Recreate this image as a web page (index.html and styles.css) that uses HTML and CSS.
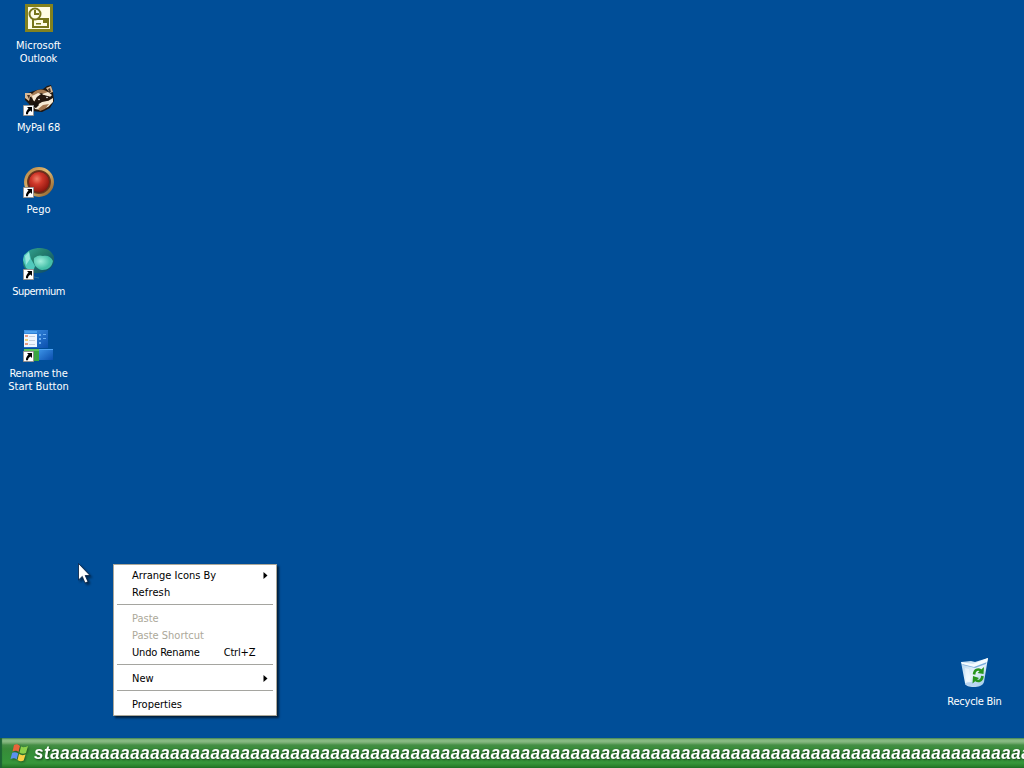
FILE: index.html
```
<!DOCTYPE html>
<html lang="en">
<head>
<meta charset="utf-8">
<title>Desktop</title>
<link rel="stylesheet" href="styles.css">
</head>
<body>
<svg class="defs" width="0" height="0">
  <defs>
    <symbol id="shortcut" viewBox="0 0 11 11">
      <path fill="#fff" d="M0 0h11v11H0z"/>
      <path fill="none" stroke="#222" stroke-width=".6" d="M.3.3h10.4v10.4H.3z"/>
      <path fill="#000" d="M4 2h5v5L7.500 5.500C6 6.500 5 7.500 5 9.300H3C2.600 7.200 4 5.200 5.500 3.600z"/>
    </symbol>
    <radialGradient id="red" cx=".4" cy=".35" r=".65"><stop offset="0" stop-color="#ef8068"/><stop offset=".4" stop-color="#d0382a"/><stop offset="1" stop-color="#8d160e"/></radialGradient>
    <linearGradient id="gold" x2="1" y2="1"><stop offset="0" stop-color="#b5803f"/><stop offset=".45" stop-color="#e0bb74"/><stop offset="1" stop-color="#8a5a26"/></linearGradient>
    <linearGradient id="teal" x2="1" y2="1"><stop offset="0" stop-color="#35a99d"/><stop offset=".4" stop-color="#24806f"/><stop offset="1" stop-color="#0b4268"/></linearGradient>
    <radialGradient id="mint" cx=".35" cy=".4"><stop offset="0" stop-color="#a0eedb"/><stop offset="1" stop-color="#45bfa8"/></radialGradient>
    <linearGradient id="panel" x2="1" y2="1"><stop offset="0" stop-color="#3d94e8"/><stop offset="1" stop-color="#0b4fae"/></linearGradient>
    <linearGradient id="glass" x2="1" y2="1"><stop offset="0" stop-color="#a9cdea"/><stop offset=".5" stop-color="#e9f5fc"/><stop offset="1" stop-color="#8bbce2"/></linearGradient>
  </defs>
</svg>
<main class="desktop">
  <section class="icons">
    <div class="item">
      <svg class="icon" viewBox="0 0 32 32">
        <path fill="#83821f" d="M2 2h28v28H2z"/><path fill="#fffde6" d="M5 5h22v22H5z"/>
        <path fill="#77751b" d="M9 16h17v10H9z"/><path fill="#fffde6" d="M11 18h13v6H11z"/><path fill="#77751b" d="M20 18h4v3h-4zM13 21h5v1.500h-5z"/>
        <circle cx="12" cy="12" r="5.500" fill="#fffde6" stroke="#77751b" stroke-width="2"/><path fill="none" stroke="#77751b" stroke-width="2" d="M12 8v4h4"/>
      </svg>
      <span class="label">Microsoft<br><span class="snug">Outlook</span></span>
    </div>
    <div class="item">
      <svg class="icon" viewBox="0 0 32 32">
        <path fill="#20160e" d="M2 10l6-2 6-2 6-1 4-3 4-1 2 7 1 9-4 7-8 4-10-1-3-7-4-4z"/>
        <path fill="#a57c56" d="M11 8c5-4 11-3 15 1l-4 1-5-1-4 5-3 1-3-3z"/>
        <path fill="#d9b894" d="M2 9l6 0 2 3-3 1-1 4-4-3zM23 4l5-2 2 6-3 1z"/>
        <path fill="#4a3524" d="M4 11l3 0-1 4zM25 5l2-1 1 4-2 0z"/>
        <path fill="#f6e9d4" d="M9 12l6-3 3 1-4 3-2 5-2-2zM19 10l6-2 4 3-2 2-5-1zM11 23l5-4 5-3 4 1 5-3 0 4-5 5-7 3-6-1z"/>
        <path fill="#24170f" d="M14 13l7-2 7 2-4 4-5 1-5 3-3-3z"/>
        <circle cx="16" cy="15.500" r=".8" fill="#fff"/><circle cx="24" cy="13.500" r=".8" fill="#fff"/>
        <path fill="#a27650" d="M15 25l5-4 6-1-4 5-5 2z"/><path fill="#17100c" d="M10 19l4-1 2 3-3 3-3-1z"/>
        <use href="#shortcut" x="0" y="21" width="11" height="11"/>
      </svg>
      <span class="label"><span class="snug">MyPal 68</span></span>
    </div>
    <div class="item">
      <svg class="icon" viewBox="0 0 32 32">
        <circle cx="16" cy="16" r="13.500" fill="#693b20" stroke="url(#gold)" stroke-width="3"/>
        <circle cx="16" cy="16" r="10.500" fill="url(#red)" stroke="#67281b"/>
        <use href="#shortcut" x="0" y="21" width="11" height="11"/>
      </svg>
      <span class="label">Pego</span>
    </div>
    <div class="item">
      <svg class="icon" viewBox="0 0 32 32">
        <path fill="url(#teal)" d="M0 12C2 3 9 0 17 0c9 0 15 6 14 12 0 7-6 12-14 13C7 26-1 22 0 12z"/>
        <path fill="#51c9bd" d="M1 7l5-4 2 8 4 7-2 6-7-4-3-8z"/>
        <path fill="#98e7dc" d="M2 8l4-4 1 7-4 6z"/>
        <path fill="url(#mint)" d="M11 10c4-3 6-3 9-2 5-1 8 1 10 5-1 6-5 9-11 9-6-1-9-6-8-12z"/>
        <path fill="none" stroke="#2875a1" d="M11 29l5 1"/>
        <use href="#shortcut" x="0" y="21" width="11" height="11"/>
      </svg>
      <span class="label"><span class="tight">Supermium</span></span>
    </div>
    <div class="item">
      <svg class="icon" viewBox="0 0 32 32">
        <path fill="url(#panel)" d="M1 0h24v18H1z"/><path fill="#eef6ff" d="M1 4h13v13H1z"/>
        <path fill="#4ba0ed" d="M2 1h12v2H2z"/><path fill="#e49a83" d="M2 5h3v2H2zM2 13h3v2H2z"/><path fill="#efcf76" d="M2 9h3v2H2z"/>
        <path stroke="#c3cfdf" d="M6 6.500h6M6 10.500h6M6 14.500h6"/><path fill="#6aaef0" d="M16 4h2v2h-2zM20 4h3v1h-3zM16 8h2v2h-2zM20 8h3v1h-3zM16 12h2v2h-2z"/>
        <path fill="#39a542" d="M1 19h15v12H1z"/><path fill="#5cc05e" d="M1 19h15v2H1z"/>
        <path fill="url(#panel)" d="M16 19h14v11H16z"/><path fill="#4da2f3" d="M16 19h14v1H16z"/>
        <use href="#shortcut" x="0" y="21" width="11" height="11"/>
      </svg>
      <span class="label"><span class="snug">Rename the</span><br>Start Button</span>
    </div>
  </section>
  <div class="item bin">
    <svg class="icon" viewBox="0 0 32 32">
      <path fill="url(#glass)" d="M2 5l10-1 4 1L29 1l-4 24c-1 4-6 5-10 5-5 0-8-1-9-4z"/>
      <path fill="#7bacdb" d="M3 6l11 2L28 3l-1 4-11 4-12-3z"/><path fill="#f4fbff" d="M2 5l12 2L29 1l-1 4-13 5-12-3z"/>
      <path fill="#f9fdff" opacity=".5" d="M6 11l4 1 2 14-5-2z"/><ellipse cx="13" cy="27" rx="7" ry="2" fill="#b9d5f1"/>
      <g fill="none" stroke="#27951e" stroke-width="2.600"><path d="M15 17.500c.5-5 4-6 7-4"/><path d="M23.500 19c-.5 5-4 6-7 4"/></g>
      <path fill="#27951e" d="M25 10l-.5 7-6-1zM13.500 26.500l.5-7.500 6 2z"/>
    </svg>
    <span class="label"><span class="mid">Recycle Bin</span></span>
  </div>
  <svg class="cursor" viewBox="0 0 14 22"><path fill="#fff" stroke="#001b3d" stroke-width=".8" d="M.5.500V17l3.800-3.600L7 20l3-1.200-2.800-6.300H12z"/></svg>
  <nav class="menu">
    <div class="row"><span>Arrange Icons By</span><svg class="arrow" viewBox="0 0 4 7"><path d="M0 0l4 3.500L0 7z"/></svg></div>
    <div class="row"><span class="wide">Refresh</span></div>
    <hr>
    <div class="row off"><span>Paste</span></div>
    <div class="row off"><span>Paste Shortcut</span></div>
    <div class="row"><span class="snug">Undo Rename</span><span class="key">Ctrl+Z</span></div>
    <hr>
    <div class="row"><span>New</span><svg class="arrow" viewBox="0 0 4 7"><path d="M0 0l4 3.500L0 7z"/></svg></div>
    <hr>
    <div class="row"><span>Properties</span></div>
  </nav>
</main>
<footer class="taskbar">
  <svg class="flag" viewBox="0 0 20 20">
    <path fill="#e8643b" d="M4 2c2-1 4-1 6 1L8.500 9C7 7.500 4.500 7.500 2.500 8.500z"/>
    <path fill="#8bd04b" d="M11 3.500c2 1 4 1 7-.5l-2 7c-2 1-4 1-6.500-.5z"/>
    <path fill="#5b91ee" d="M2.200 9.800c2-1 4-.8 6 .6l-1.500 6C5 15 3 15 .5 16z"/>
    <path fill="#f7cf45" d="M9 11c2 1.300 4 1.500 6.500.5l-1.800 6c-2 1-4 1-6.200-.5z"/>
  </svg>
  <span class="start">staaaaaaaaaaaaaaaaaaaaaaaaaaaaaaaaaaaaaaaaaaaaaaaaaaaaaaaaaaaaaaaaaaaaaaaaaaaaaaaaaaaaaaaaaaaaaaaaaa</span>
</footer>
</body>
</html>
```
FILE: styles.css
```
* { box-sizing: border-box; }
body {
  margin: 0;
  width: 1024px;
  height: 768px;
  overflow: hidden;
  display: flex;
  flex-direction: column;
  background: #004e98;
  font: 11px/13px "DejaVu Sans Condensed", "DejaVu Sans", sans-serif;
  font-stretch: condensed;
}
.defs { position: absolute; }
.desktop { flex: 1; position: relative; }
.icons { width: 77px; padding-top: 2px; }
.item { width: 77px; height: 82px; display: flex; flex-direction: column; align-items: center; }
.icon { width: 32px; height: 32px; flex: none; }
.label { margin-top: 5px; color: #fff; text-align: center; white-space: nowrap; }
.snug { letter-spacing: -.17px; }
.mid { letter-spacing: -.25px; }
.tight { letter-spacing: -.5px; }
.wide { letter-spacing: .15px; }
.bin { position: absolute; left: 936px; top: 657px; }
.bin .label { margin-top: 6px; }
.cursor { position: absolute; left: 78px; top: 563px; width: 14px; height: 22px; filter: drop-shadow(2px 2px 1px #0007); }
.menu {
  position: absolute;
  left: 113px;
  top: 564px;
  width: 164px;
  height: 152px;
  padding: 2px 3px 3px;
  background: #fff;
  border: 1px solid #aca899;
  box-shadow: 2px 2px 2px #0009;
}
.row { height: 17px; padding: 0 5px 0 15px; display: flex; align-items: center; line-height: 17px; white-space: nowrap; }
.off { color: #aca899; }
.menu hr { height: 1px; margin: 3px 0 5px; border: 0; background: #a5a5a0; }
.arrow { width: 5px; height: 7px; margin-left: auto; }
.key { margin-left: 24px; letter-spacing: -.17px; }
.taskbar {
  height: 30px;
  display: flex;
  align-items: center;
  padding-left: 10px;
  overflow: hidden;
  background: linear-gradient(#397e52 0, #77ae72 1px, #8dbd88 3px, #75ab70 5px, #468e46 7px, #388a39 11px, #35913a 18px, #37963a 25px, #2b822d 28px, #207023 30px);
  box-shadow: inset 2px 0 1px #1c6335;
}
.flag { width: 20px; height: 20px; flex: none; filter: drop-shadow(1px 1px 1px #0006); }
.start {
  margin-left: 4px;
  padding-top: 1px;
  color: #fff;
  font: italic bold 18px/29px "Liberation Sans", Arial, sans-serif;
  letter-spacing: .55px;
  transform: scaleX(.948);
  transform-origin: left;
  white-space: nowrap;
  text-shadow: 1px 1px 2px #173c18;
}
```
